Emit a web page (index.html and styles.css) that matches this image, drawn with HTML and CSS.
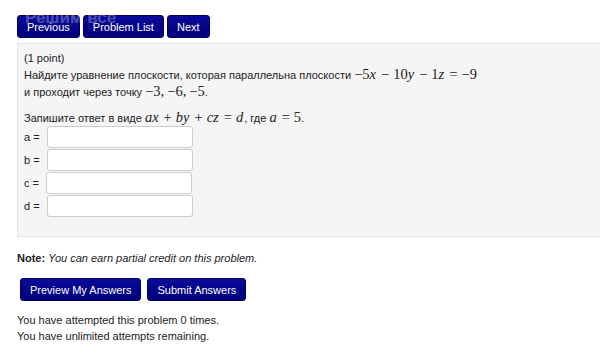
FILE: index.html
```html
<!DOCTYPE html>
<html lang="ru">
<head>
    <meta charset="UTF-8">
    <title>Решим всё</title>
    <link rel="stylesheet" href="styles.css">
</head>
<body>
    <div class="top">
        <div class="nav">
            <button class="btn">Previous</button>
            <button class="btn">Problem List</button>
            <button class="btn">Next</button>
        </div>
        <div class="site-title">Решим всё</div>
    </div>

    <div class="problem">
        <p>(1 point)</p>
        <p>Найдите уравнение плоскости, которая параллельна плоскости <span class="m"><span class="op">&minus;</span>5<i>x</i><span class="op bin">&minus;</span>10<i>y</i><span class="op bin">&minus;</span>1<i>z</i><span class="op bin">=</span><span class="op">&minus;</span>9</span><br>
        и проходит через точку <span class="m"><span class="op">&minus;</span>3,<span class="sp"></span><span class="op">&minus;</span>6,<span class="sp"></span><span class="op">&minus;</span>5</span>.</p>
        <p class="gap">Запишите ответ в виде <span class="m"><i>ax</i><span class="op bin">+</span><i>by</i><span class="op bin">+</span><i>cz</i><span class="op bin">=</span><i>d</i></span>, где <span class="m"><i>a</i><span class="op bin">=</span>5</span>.</p>
        <div class="answers">
            <label>a = <input type="text"></label>
            <label>b = <input type="text"></label>
            <label>c = <input type="text"></label>
            <label>d = <input type="text"></label>
        </div>
    </div>

    <p class="note"><b>Note:</b> <i>You can earn partial credit on this problem.</i></p>

    <div class="submit">
        <button class="btn">Preview My Answers</button>
        <button class="btn">Submit Answers</button>
    </div>

    <p class="attempts">You have attempted this problem 0 times.<br>You have unlimited attempts remaining.</p>
</body>
</html>
```

FILE: styles.css
```css
* {
    box-sizing: border-box;
    margin: 0;
    padding: 0;
}

body {
    font-family: 'Liberation Sans', Arial, sans-serif;
    font-size: 11px;
    line-height: 17px;
    color: #222;
    background: #fff;
    padding: 15px 0 0 17px;
    overflow: hidden;
}

.top {
    position: relative;
}

.nav {
    display: flex;
    gap: 3px;
}

.site-title {
    position: absolute;
    top: -6px;
    left: 8px;
    font-size: 17px;
    font-weight: bold;
    color: rgba(255, 255, 255, 0.3);
}

.btn {
    font-family: 'Liberation Sans', Arial, sans-serif;
    font-size: 11px;
    color: #fff;
    background: linear-gradient(#0a0a9a, #00007a);
    border: 1px solid #000060;
    border-radius: 3px;
    height: 23px;
    padding: 0 9px;
}

.problem {
    margin-top: 5px;
    width: 600px;
    background: #f5f5f5;
    border: 1px solid #e3e3e3;
    padding: 6px 5px 0 6px;
    height: 194px;
}

.m {
    font-family: 'Liberation Serif', 'DejaVu Serif', serif;
    font-size: 14.5px;
    line-height: 1;
}

.m i {
    font-style: italic;
    margin-right: 1px;
}

.op {
    display: inline-block;
}

.op.bin {
    margin: 0 4px;
}

.sp {
    display: inline-block;
    width: 3px;
}

.gap {
    margin-top: 9px;
}

.answers {
    display: flex;
    flex-direction: column;
    gap: 1px;
    margin-top: -1px;
}

.answers label {
    display: flex;
    align-items: center;
    gap: 7px;
}

.answers input {
    width: 146px;
    height: 22px;
    border: 1px solid #ccc;
    border-radius: 3px;
    background: #fff;
}

.note {
    margin-top: 13px;
}

.submit {
    display: flex;
    gap: 6px;
    margin: 11px 0 0 3px;
}

.submit .btn {
    padding: 0 9px;
}

.attempts {
    margin-top: 11px;
    line-height: 16px;
}
```
